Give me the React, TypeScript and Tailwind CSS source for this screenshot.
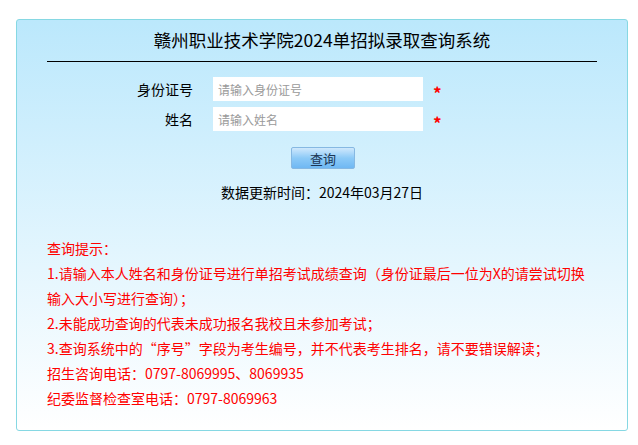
import React from 'react';

const tips: string[] = [
  '查询提示：',
  '1.请输入本人姓名和身份证号进行单招考试成绩查询（身份证最后一位为X的请尝试切换',
  '输入大小写进行查询）；',
  '2.未能成功查询的代表未成功报名我校且未参加考试；',
  '3.查询系统中的“序号”字段为考生编号，并不代表考生排名，请不要错误解读；',
  '招生咨询电话：0797-8069995、8069935',
  '纪委监督检查室电话：0797-8069963',
];

const fields = [
  { label: '身份证号', placeholder: '请输入身份证号' },
  { label: '姓名', placeholder: '请输入姓名' },
];

const App: React.FC = () => {
  return (
    <div className="w-[638px] h-[445px] bg-white pt-[19px] pl-[16px] font-['Noto_Sans_CJK_SC',sans-serif]">
      <div className="w-[612px] h-[412px] border border-[#86d8e3] rounded-[3px] bg-gradient-to-b from-[#bbe8fc] to-[#ffffff] px-[30px] pt-[6px]">
        <h1 className="text-center text-[17.5px] leading-[28px] text-black">
          赣州职业技术学院2024单招拟录取查询系统
        </h1>
        <div className="mt-[7px] h-px bg-black" />

        <div className="mt-[15px] flex flex-col gap-[6px]">
          {fields.map((f) => (
            <div key={f.label} className="flex items-center h-[24px]">
              <span className="w-[146px] text-right text-[14px] text-black">{f.label}</span>
              <input
                className="ml-[20px] w-[210px] h-[24px] bg-white px-[5px] text-[12px] outline-none placeholder:text-[#9a9a9a]"
                placeholder={f.placeholder}
              />
              <span className="ml-[10px] text-[17px] leading-none font-bold text-[#ff0000] mt-[6px]">*</span>
            </div>
          ))}
        </div>

        <div className="mt-[16px] flex justify-center pl-[2px]">
          <button className="w-[64px] h-[22px] border border-[#86b8e2] rounded-[2px] bg-gradient-to-b from-[#cfe8fc] via-[#8ccaf7] to-[#6fb8f3] text-[13px] leading-none text-[#1c3554]">
            查询
          </button>
        </div>

        <p className="mt-[13px] text-center text-[14px] leading-[20px] text-black">
          数据更新时间：2024年03月27日
        </p>

        <div className="mt-[34px] text-[14px] leading-[25px] text-[#ff0000]">
          {tips.map((t, i) => (
            <p key={i}>{t}</p>
          ))}
        </div>
      </div>
    </div>
  );
};

export default App;
